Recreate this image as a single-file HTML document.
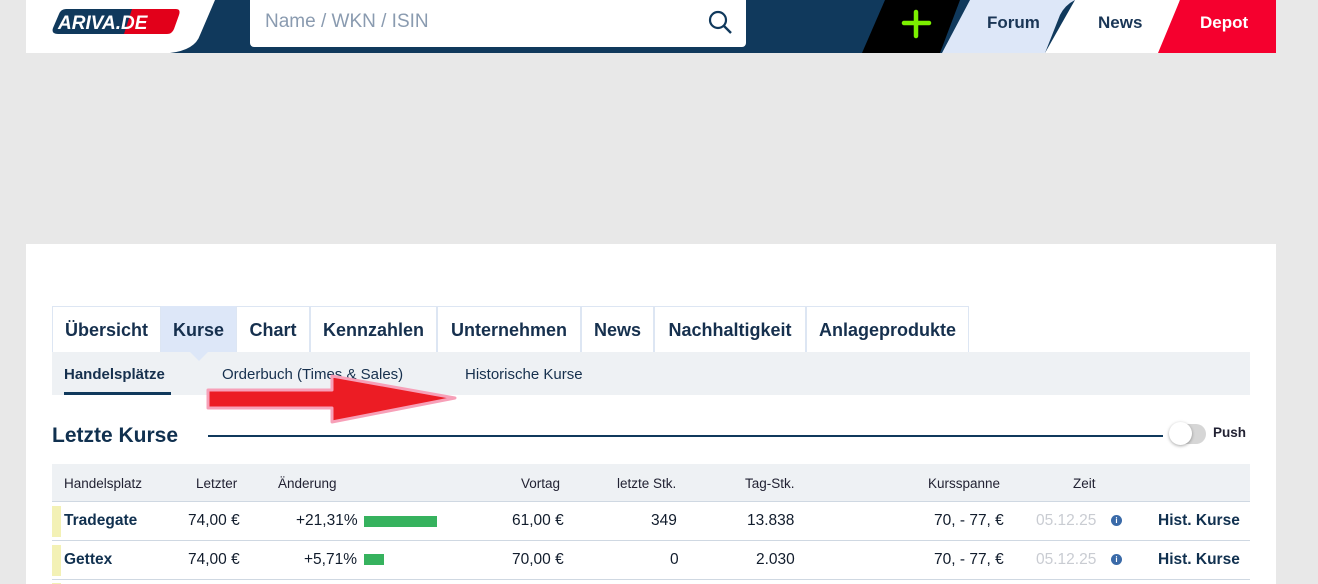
<!DOCTYPE html>
<html><head><meta charset="utf-8"><style>
*{margin:0;padding:0;box-sizing:border-box}
html,body{width:1318px;height:584px}
body{background:#e8e8e8;font-family:"Liberation Sans",sans-serif;position:relative;overflow:hidden;color:#0f2c4c}
.abs{position:absolute}
.tab{position:absolute;top:306px;height:47px;border:1px solid #dde6f3;border-bottom:none;font-size:18px;font-weight:bold;line-height:47px;text-align:center;color:#16304e;background:#fff}
.sub{position:absolute;top:366px;font-size:15px;color:#16304e}
.th{position:absolute;top:476px;font-size:13.5px;color:#223}
.td{position:absolute;font-size:15.5px;color:#111c2c}
</style></head><body>
<svg class="abs" style="left:0;top:0" width="1318" height="53">
<rect x="26" y="0" width="1250" height="53" fill="#fff"/>
<path d="M215 0 L1276 0 L1276 53 L170 53 Q195 50 200 35 Z" fill="#10395c"/>
<path d="M885 0 L960 0 L940 53 L862 53 Z" fill="#000"/>
<path d="M970 0 L1075 0 Q1065 5 1060 15 L1045 53 L942 53 Z" fill="#dde7f8"/>
<path d="M1075 0 L1180 0 L1160 53 L1045 53 Z" fill="#fff"/>
<path d="M1180 0 L1276 0 L1276 53 L1158 53 Z" fill="#f5002e"/>
<rect x="250" y="0" width="496" height="47" rx="4" fill="#fff"/>
<rect x="250" y="0" width="496" height="10" fill="#fff"/>
<path d="M66 9 L136 9 L128 34 L58 34 Q51 34 53 28 L59 14 Q61 9 66 9 Z" fill="#10395c"/>
<path d="M132 9 L176 9 Q181 9 179 15 L174 29 Q172 34 167 34 L124 34 Z" fill="#e2001a"/>
<text x="58" y="29" font-family="Liberation Sans" font-style="italic" font-weight="bold" font-size="19" fill="#fff">ARIVA.DE</text>
<circle cx="718" cy="20" r="8" fill="none" stroke="#10395c" stroke-width="2.2"/>
<line x1="724" y1="26" x2="731" y2="33" stroke="#10395c" stroke-width="2.4"/>
<path d="M916 12 L916 36 M904 23 L929 23" stroke="#7cf000" stroke-width="4.5" stroke-linecap="round"/>
</svg>
<div class="abs" style="left:265px;top:11px;font-size:19px;color:#8a9bb0">Name / WKN / ISIN</div>
<div class="abs" style="left:987px;top:13px;font-size:17px;font-weight:bold;color:#1a3656">Forum</div>
<div class="abs" style="left:1098px;top:13px;font-size:17px;font-weight:bold;color:#1a3656">News</div>
<div class="abs" style="left:1200px;top:13px;font-size:17px;font-weight:bold;color:#fff">Depot</div>

<div class="abs" style="left:26px;top:244px;width:1250px;height:340px;background:#fff"></div>
<div class="tab" style="left:52px;width:109px">Übersicht</div>
<div class="tab" style="left:161px;width:75px;background:#dde7f8;border-color:#dde7f8">Kurse</div>
<div class="tab" style="left:236px;width:74px">Chart</div>
<div class="tab" style="left:310px;width:127px">Kennzahlen</div>
<div class="tab" style="left:437px;width:144px">Unternehmen</div>
<div class="tab" style="left:581px;width:73px">News</div>
<div class="tab" style="left:654px;width:152px">Nachhaltigkeit</div>
<div class="tab" style="left:806px;width:163px">Anlageprodukte</div>
<div class="abs" style="left:52px;top:352px;width:1198px;height:43px;background:#eef1f4"></div>
<div class="abs" style="left:190px;top:352px;width:0;height:0;border-left:9px solid transparent;border-right:9px solid transparent;border-top:9px solid #dde7f8"></div>
<div class="sub" style="left:64px;font-weight:bold">Handelsplätze</div>
<div class="abs" style="left:64px;top:392px;width:107px;height:3px;background:#10395c"></div>
<div class="sub" style="left:222px">Orderbuch (Times &amp; Sales)</div>
<div class="sub" style="left:465px">Historische Kurse</div>
<svg class="abs" style="left:200px;top:372px" width="265" height="56">
<path d="M8 18 L132 18 L132 4 L255 26 L132 50 L132 36 L8 36 Z" fill="#ec1c24" stroke="#f7a0b8" stroke-width="3" stroke-linejoin="round"/>
</svg>
<div class="abs" style="left:52px;top:424px;font-size:21px;font-weight:bold;color:#10304f">Letzte Kurse</div>
<div class="abs" style="left:208px;top:435px;width:955px;height:2px;background:#10395c"></div>
<div class="abs" style="left:1170px;top:424px;width:36px;height:20px;border-radius:10px;background:#d6d6d6"></div>
<div class="abs" style="left:1169px;top:422px;width:23px;height:23px;border-radius:50%;background:#fff;box-shadow:0 1px 3px rgba(0,0,0,.35)"></div>
<div class="abs" style="left:1213px;top:425px;font-size:13.5px;font-weight:bold;color:#223">Push</div>

<div class="abs" style="left:52px;top:464px;width:1198px;height:38px;background:#eef1f4;border-bottom:1px solid #cfd8e2"></div>
<div class="th" style="left:64px">Handelsplatz</div>
<div class="th" style="left:196px">Letzter</div>
<div class="th" style="left:278px">Änderung</div>
<div class="th" style="left:521px">Vortag</div>
<div class="th" style="left:617px">letzte Stk.</div>
<div class="th" style="left:745px">Tag-Stk.</div>
<div class="th" style="left:928px">Kursspanne</div>
<div class="th" style="left:1073px">Zeit</div>

<div class="abs" style="left:52px;top:540px;width:1198px;height:1px;background:#cfd8e2"></div>
<div class="abs" style="left:52px;top:579px;width:1198px;height:1px;background:#cfd8e2"></div>
<div class="abs" style="left:52px;top:506px;width:9px;height:31px;background:#f3f1b5"></div>
<div class="abs" style="left:52px;top:545px;width:9px;height:31px;background:#f3f1b5"></div>
<div class="abs" style="left:52px;top:583px;width:9px;height:1px;background:#f3f1b5"></div>

<div class="td" style="left:64px;top:512px;font-weight:bold;color:#10304f">Tradegate</div>
<div class="td" style="left:188px;top:512px">74,00 €</div>
<div class="td" style="left:296px;top:512px">+21,31%</div>
<div class="abs" style="left:364px;top:516px;width:73px;height:11px;background:#36b25e"></div>
<div class="td" style="left:512px;top:512px">61,00 €</div>
<div class="td" style="left:651px;top:512px">349</div>
<div class="td" style="left:747px;top:512px">13.838</div>
<div class="td" style="left:934px;top:512px">70, - 77, €</div>
<div class="td" style="left:1036px;top:512px;color:#c9ccd2">05.12.25</div>
<div class="abs" style="left:1111px;top:515px;width:11px;height:11px;border-radius:50%;background:#3a6aa8;color:#fff;font-size:8px;font-weight:bold;text-align:center;line-height:11px">i</div>
<div class="td" style="left:1158px;top:512px;font-weight:bold;color:#10304f">Hist. Kurse</div>

<div class="td" style="left:64px;top:551px;font-weight:bold;color:#10304f">Gettex</div>
<div class="td" style="left:188px;top:551px">74,00 €</div>
<div class="td" style="left:304px;top:551px">+5,71%</div>
<div class="abs" style="left:364px;top:554px;width:20px;height:11px;background:#36b25e"></div>
<div class="td" style="left:512px;top:551px">70,00 €</div>
<div class="td" style="left:670px;top:551px">0</div>
<div class="td" style="left:756px;top:551px">2.030</div>
<div class="td" style="left:934px;top:551px">70, - 77, €</div>
<div class="td" style="left:1036px;top:551px;color:#c9ccd2">05.12.25</div>
<div class="abs" style="left:1111px;top:554px;width:11px;height:11px;border-radius:50%;background:#3a6aa8;color:#fff;font-size:8px;font-weight:bold;text-align:center;line-height:11px">i</div>
<div class="td" style="left:1158px;top:551px;font-weight:bold;color:#10304f">Hist. Kurse</div>
</body></html>
